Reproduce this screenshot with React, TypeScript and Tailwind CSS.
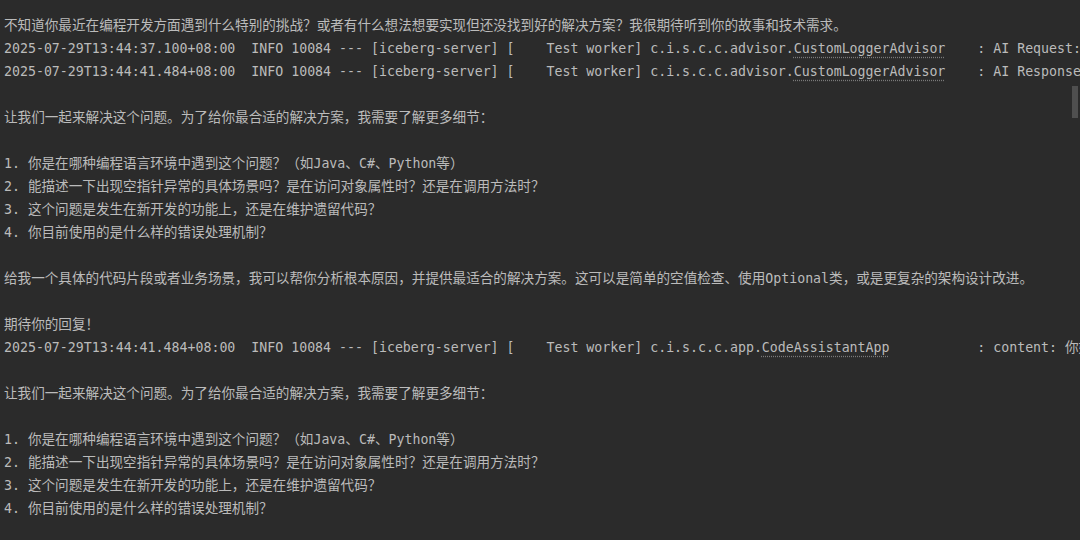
import type { ReactNode } from "react";

// 中文片段字宽稍大于等宽字体，单独包一层
const CJK = /([\u3000-\u303f\u4e00-\u9fff\uff00-\uffef]+)/;

function Txt({ s }: { s: string }) {
    return (
        <>
            {s.split(CJK).map((part, i) =>
                CJK.test(part) ? (
                    <span key={i} className="text-[13.6px]">
                        {part}
                    </span>
                ) : (
                    <span key={i}>{part}</span>
                )
            )}
        </>
    );
}

function Line({ children }: { children?: ReactNode }) {
    return <div className="h-[23.05px] whitespace-pre overflow-hidden">{children ?? " "}</div>;
}

function Log({ time, logger, cls, pad, msg }: { time: string; logger: string; cls: string; pad: string; msg: string }) {
    return (
        <Line>
            {time}  INFO 10084 --- [iceberg-server] [    Test worker] {logger}
            <span className="underline decoration-dotted decoration-[#7a7a7a] underline-offset-[4px]">{cls}</span>
            {pad}: <Txt s={msg} />
        </Line>
    );
}

const questions = [
    "1. 你是在哪种编程语言环境中遇到这个问题？（如Java、C#、Python等）",
    "2. 能描述一下出现空指针异常的具体场景吗？是在访问对象属性时？还是在调用方法时？",
    "3. 这个问题是发生在新开发的功能上，还是在维护遗留代码？",
    "4. 你目前使用的是什么样的错误处理机制？",
];

function Answer() {
    return (
        <>
            <Line>
                <Txt s="让我们一起来解决这个问题。为了给你最合适的解决方案，我需要了解更多细节：" />
            </Line>
            <Line />
            {questions.map((q) => (
                <Line key={q}>
                    <Txt s={q} />
                </Line>
            ))}
        </>
    );
}

export default function App() {
    return (
        <div
            className="relative w-[1080px] h-[540px] overflow-hidden bg-[#2b2b2b] text-[#bbbbbb] text-[13.25px] leading-[23.05px] pl-1 pt-[13.5px]"
            style={{ fontFamily: '"DejaVu Sans Mono", "Liberation Mono", "Noto Sans CJK SC", monospace' }}
        >
            <Line>
                <Txt s="不知道你最近在编程开发方面遇到什么特别的挑战？或者有什么想法想要实现但还没找到好的解决方案？我很期待听到你的故事和技术需求。" />
            </Line>
            <Log
                time="2025-07-29T13:44:37.100+08:00"
                logger="c.i.s.c.c.advisor."
                cls="CustomLoggerAdvisor"
                pad="    "
                msg="AI Request:"
            />
            <Log
                time="2025-07-29T13:44:41.484+08:00"
                logger="c.i.s.c.c.advisor."
                cls="CustomLoggerAdvisor"
                pad="    "
                msg="AI Response: 我理解你遇到了空指针异常的问题"
            />
            <Line />
            <Answer />
            <Line />
            <Line>
                <Txt s="给我一个具体的代码片段或者业务场景，我可以帮你分析根本原因，并提供最适合的解决方案。这可以是简单的空值检查、使用Optional类，或是更复杂的架构设计改进。" />
            </Line>
            <Line />
            <Line>
                <Txt s="期待你的回复！" />
            </Line>
            <Log
                time="2025-07-29T13:44:41.484+08:00"
                logger="c.i.s.c.c.app."
                cls="CodeAssistantApp"
                pad="           "
                msg="content: 你好，我理解你遇到了空指针异常的问题"
            />
            <Line />
            <Answer />
            <Line />

            {/* 滚动条 */}
            <div className="absolute right-[2px] top-[86px] w-[6px] h-[32px] bg-[#4f4f4f]" />
        </div>
    );
}
